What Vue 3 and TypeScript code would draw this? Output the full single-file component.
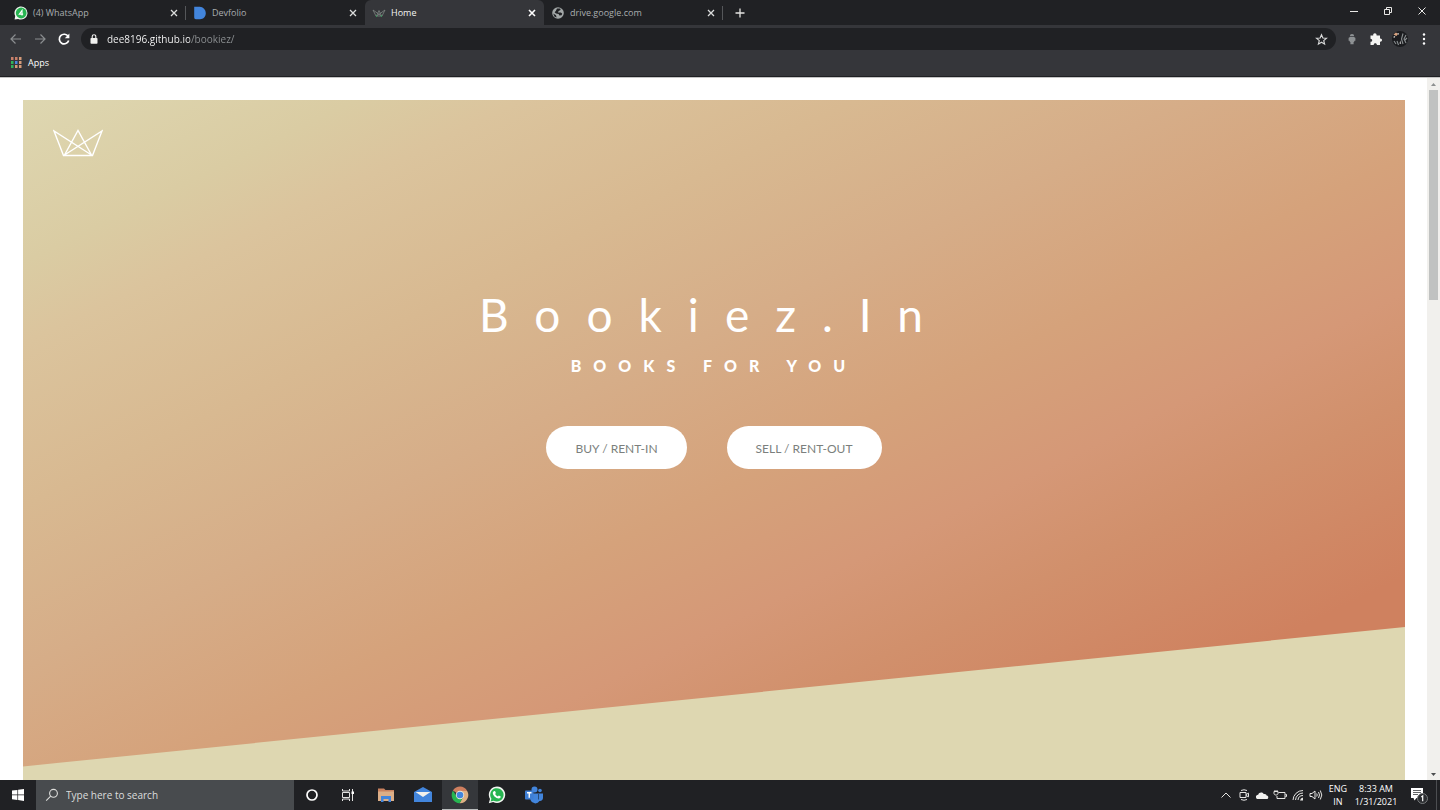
<script setup lang="ts">
interface Tab {
  title: string
  icon: 'whatsapp' | 'devfolio' | 'crown' | 'globe'
  active: boolean
}

const tabs: Tab[] = [
  { title: '(4) WhatsApp', icon: 'whatsapp', active: false },
  { title: 'Devfolio', icon: 'devfolio', active: false },
  { title: 'Home', icon: 'crown', active: true },
  { title: 'drive.google.com', icon: 'globe', active: false },
]

const appDots: { x: number; y: number; c: string }[] = [
  '#c9806a', '#c9806a', '#d59a78',
  '#2fb35a', '#4a86dc', '#d59a78',
  '#2fb35a', '#d59a78', '#d59a78',
].map((c, i) => ({ x: (i % 3) * 4, y: Math.floor(i / 3) * 4, c }))
</script>

<template>
  <div class="desktop">
    <header class="browser">
      <div class="tabstrip">
        <div class="tabs">
          <div v-for="tab in tabs" :key="tab.title" class="tab" :class="{ active: tab.active }">
            <button class="tab-main" type="button">
              <svg v-if="tab.icon === 'whatsapp'" class="fav" viewBox="0 0 14 14" aria-hidden="true">
                <path d="M.6 13.600 1.200 10A6.500 6.500 0 1 1 4.200 12.900Z" fill="#f1f5f1" />
                <circle cx="7.200" cy="7" r="5.400" fill="#27b551" />
                <path d="M8 9.600V4.400L5.300 8.100h3.800" fill="none" stroke="#fff" stroke-width="1.100" />
              </svg>
              <svg v-else-if="tab.icon === 'devfolio'" class="fav" viewBox="0 0 14 14" aria-hidden="true">
                <path d="M1.200 .8h5.600a6.200 6.200 0 0 1 6 6.200c0 3.600-2.300 6.200-5.800 6.200H2.800A1.600 1.600 0 0 1 1.200 11.600Z" fill="#4285dc" />
              </svg>
              <svg v-else-if="tab.icon === 'crown'" class="fav" viewBox="0 0 14 14" aria-hidden="true">
                <path d="M1 4 4 10h6l3-6L4.500 10 7 4.500 9.500 10Z" fill="none" stroke="#7e8583" stroke-width=".8" />
                <circle cx="4.500" cy="10" r=".7" fill="#2fa35a" />
                <circle cx="9.500" cy="10" r=".7" fill="#2fa35a" />
              </svg>
              <svg v-else class="fav" viewBox="0 0 14 14" aria-hidden="true">
                <circle cx="7" cy="7" r="5.800" fill="#a3a8a8" />
                <path d="M6 2.600 9.200 2.400 9.600 4 7.600 5 7 6.400 9.800 6.400 11.200 7.600 10.600 9.200 8.400 9.400 7.600 8 5 7.600 3.600 6.200 4.800 5ZM2.200 7.600 5 9.200 5.600 11.600 3.400 10.400Z" fill="#202124" />
              </svg>
              <span>{{ tab.title }}</span>
            </button>
            <button class="close" type="button" aria-label="Close tab">
              <svg viewBox="0 0 10 10"><path d="M2 2 8 8M8 2 2 8" /></svg>
            </button>
          </div>
          <button class="newtab" type="button" aria-label="New tab">
            <svg viewBox="0 0 12 12"><path d="M6 1.500v9M1.500 6h9" /></svg>
          </button>
        </div>
        <div class="winctl">
          <button type="button" aria-label="Minimize"><svg viewBox="0 0 12 12"><path d="M2 6.500h8" /></svg></button>
          <button type="button" aria-label="Restore"><svg viewBox="0 0 12 12"><path d="M2.500 4.500h5v5h-5ZM4.500 4.500v-2h5v5h-2" /></svg></button>
          <button type="button" aria-label="Close"><svg viewBox="0 0 12 12"><path d="M2.500 2.500l7 7M9.500 2.500l-7 7" /></svg></button>
        </div>
      </div>

      <div class="toolbar">
        <button class="tool dim" type="button" aria-label="Back">
          <svg viewBox="0 0 14 14"><path d="M12 7H2.500M6.500 2.500 2 7l4.500 4.500" /></svg>
        </button>
        <button class="tool dim" type="button" aria-label="Forward">
          <svg viewBox="0 0 14 14"><path d="M2 7h9.500M7.500 2.500 12 7l-4.500 4.500" /></svg>
        </button>
        <button class="tool" type="button" aria-label="Reload">
          <svg viewBox="0 0 14 14"><path d="M11.200 4.500A4.800 4.800 0 1 0 11.700 8.500" stroke-width="1.700" /><path d="M12.400 1.500v4.700H7.800Z" fill="#fff" stroke="none" /></svg>
        </button>
        <div class="omnibox">
          <svg class="lock" viewBox="0 0 10 12" aria-hidden="true">
            <rect x="1.500" y="5" width="7" height="5.800" rx=".8" fill="#f1f1ef" />
            <path d="M3.200 5V3.500a1.800 1.800 0 0 1 3.600 0V5" fill="none" stroke="#f1f1ef" stroke-width="1.100" />
          </svg>
          <input class="url" type="text" aria-label="Address" value="dee8196.github.io/bookiez/" />
          <button class="tool star" type="button" aria-label="Bookmark this page">
            <svg viewBox="0 0 14 14"><path d="m7 1.800 1.500 3.600 3.900.3-3 2.500.95 3.800L7 9.900 3.650 12l.95-3.800-3-2.500 3.900-.3Z" /></svg>
          </button>
        </div>
        <button class="tool" type="button" aria-label="Extension">
          <svg viewBox="0 0 14 14"><g fill="#8d9193" stroke="none"><path d="M4.800 4.200a2.200 2.200 0 0 1 4.400 0Z" /><path d="M4.400 5h5.200v.8h.8v3h-.8L9 10H8.600v2.200H5.400V10H5l-.6-1.200h-.8v-3h.8Z" /></g></svg>
        </button>
        <button class="tool" type="button" aria-label="Extensions">
          <svg viewBox="0 0 14 14"><path d="M1.500 3.500h2.700C3.800.5 7.900.5 7.600 3.500h3.400v3c2.700-.3 2.700 3.500 0 3.200V13H7.900c.1-2.500-3.300-2.500-3.200 0H1.500V9.700c2.300.2 2.300-3 0-3Z" fill="#f5f5f3" stroke="none" /></svg>
        </button>
        <button class="tool avatar" type="button" aria-label="Profile">
          <svg viewBox="0 0 18 18">
            <circle cx="9" cy="9" r="8" fill="#1b1c1f" />
            <path d="M2.500 4.500 5 2.500l2 1.500-1.500 2Z" fill="#d9a27e" />
            <path d="M2 7 4.500 5.500l-1 2.500ZM8.500 13.500l.7-3 1 3.500ZM6 3.500l2-.5-.5 2Z" fill="#c8c8c5" />
            <path d="M12 3.500 10.500 9l1.500 5M15 5l-2 4 2 4M16 8l-2 2M6 11l1.500 4M3 11l2 3" fill="none" stroke="#8a8f91" stroke-width="1.100" />
          </svg>
        </button>
        <button class="tool" type="button" aria-label="Menu">
          <svg viewBox="0 0 14 14"><g fill="#fff" stroke="none"><circle cx="7" cy="2.500" r="1.200" /><circle cx="7" cy="7" r="1.200" /><circle cx="7" cy="11.500" r="1.200" /></g></svg>
        </button>
      </div>

      <nav class="bookmarks">
        <button type="button">
          <svg viewBox="0 0 11 11" aria-hidden="true">
            <rect v-for="(d, i) in appDots" :key="i" :x="d.x" :y="d.y" width="2.500" height="3" :fill="d.c" />
          </svg>
          Apps
        </button>
      </nav>
    </header>

    <div class="viewport">
      <main class="page">
        <section class="hero">
          <div class="slope"></div>
          <a class="brand" href="#home" aria-label="Home">
            <svg viewBox="0 0 50 28"><path d="M1 2 10.500 26.500h29L49 2 11.500 26 25 1.500 38.500 26Z" /></svg>
          </a>
          <div class="intro">
            <h1>Bookiez.In</h1>
            <h2>BOOKS FOR YOU</h2>
            <div class="actions">
              <a class="pill" href="#buy">BUY / RENT-IN</a>
              <a class="pill" href="#sell">SELL / RENT-OUT</a>
            </div>
          </div>
        </section>
      </main>
      <div class="scrollbar" aria-hidden="true">
        <svg viewBox="0 0 13 12"><path d="M4 8h5L6.500 5Z" fill="#8d9090" /></svg>
        <div class="track"><div class="thumb"></div></div>
        <svg viewBox="0 0 13 12"><path d="M4 5h5L6.500 8Z" fill="#4b4d4f" /></svg>
      </div>
    </div>

    <footer class="taskbar">
      <button class="start" type="button" aria-label="Start">
        <svg viewBox="0 0 12 12"><path d="M0 1.600 5.400.9v4.700H0ZM6.100.8 12 0v5.600H6.100ZM0 6.300h5.400V11L0 10.300ZM6.100 6.300H12V12l-5.900-.9Z" fill="#fff" /></svg>
      </button>
      <label class="search">
        <svg viewBox="0 0 14 14" aria-hidden="true"><circle cx="8.500" cy="5.300" r="3.900" /><path d="M5.700 8.100 1.200 12.600" /></svg>
        <input type="text" placeholder="Type here to search" aria-label="Type here to search" />
      </label>
      <div class="apps">
        <button type="button" aria-label="Cortana">
          <svg viewBox="0 0 20 20"><circle cx="10" cy="10" r="5" fill="none" stroke="#fff" stroke-width="1.700" /></svg>
        </button>
        <button type="button" aria-label="Task view">
          <svg viewBox="0 0 20 20"><g fill="none" stroke="#e4e4e2"><path d="M3.500 4v2h7V4M3.500 16v-2h7v2M3.500 7.500h7v5h-7ZM13.500 4v12" /></g><path d="M12.500 6.500h2.500v2.500h-2.500Z" fill="#fff" /></svg>
        </button>
        <button type="button" aria-label="File Explorer">
          <svg viewBox="0 0 20 20"><path d="M2 3.500h6l1.500 1.500H18V16H2Z" fill="#c9825f" /><path d="M2 6.500h16v9.500H2Z" fill="#dcae87" /><path d="M5 11h10v6h-2.500v-3h-5v3H5Z" fill="#4285dc" /></svg>
        </button>
        <button type="button" aria-label="Mail">
          <svg viewBox="0 0 20 20"><path d="M1 7 10 2l9 5v10H1Z" fill="#4285dc" /><path d="M2.500 7h15L10 12Z" fill="#f3f1eb" /></svg>
        </button>
        <button class="running" type="button" aria-label="Chrome">
          <svg viewBox="0 0 20 20"><path d="M10 10 2.900 5.500A8.300 8.300 0 0 1 17.200 5.900H10Z" fill="#cf7f5f" /><path d="M10 10V5.900h7.200A8.300 8.300 0 0 1 9.600 18.300L13 12Z" fill="#ddb083" /><path d="M2.900 5.600A8.300 8.300 0 0 0 9.600 18.300L13 12.500 10 13 7 12Z" fill="#27b551" /><circle cx="10" cy="10" r="4.200" fill="#e9e5dc" /><circle cx="10" cy="10" r="3.300" fill="#4285dc" /></svg>
        </button>
        <button type="button" aria-label="WhatsApp">
          <svg viewBox="0 0 20 20"><path d="M1.800 18.300 3 14A8.200 8.200 0 1 1 6.200 17Z" fill="#f2f5f1" /><path d="M3.600 16.500 4.400 13.700A6.700 6.700 0 1 1 6.600 15.700Z" fill="#27b551" /><path d="M7 6.200c.6-.5 1.100-.3 1.300.2l.6 1.500c-.1.500-.6.700-.8 1.100.6 1.200 1.500 2 2.700 2.500l1-.9c.6.100 1.500.6 1.900.9.100 1.200-.9 2-2 2-3-.2-5.700-2.900-5.900-5.500 0-.7.500-1.400 1.200-1.800Z" fill="#fff" /></svg>
        </button>
        <button type="button" aria-label="Teams">
          <svg viewBox="0 0 20 20"><circle cx="10.500" cy="4.500" r="3" fill="#4285dc" /><circle cx="16" cy="5.500" r="1.800" fill="#4285dc" /><path d="M7 8.500h12V13a3 3 0 0 1-3.500 3A5 5 0 0 1 6.500 15Z" fill="#4285dc" /><path d="M14.500 9v5.500" stroke="#25405f" stroke-width=".8" /><rect x="1" y="5.500" width="8.500" height="9" rx=".8" fill="#3f7fd4" /><path d="M3 7.800h4.500M5.250 7.800v5" stroke="#fff" stroke-width="1.400" /></svg>
        </button>
      </div>
      <div class="tray">
        <button type="button" aria-label="Show hidden icons"><svg viewBox="0 0 14 14"><path d="M2.500 9.500l4.500-4.500 4.500 4.500" /></svg></button>
        <button type="button" aria-label="Meet now"><svg viewBox="0 0 14 14"><path d="M3 4.500h6v5H3ZM9 6.500l2.500-1.300v3.600L9 7.500M4 2.500q3-1.500 6 0M4 11.500q3 1.500 6 0" /></svg></button>
        <button type="button" aria-label="OneDrive"><svg viewBox="0 0 14 14"><path d="M1 9.500C.6 7.500 2 6.600 3.200 6.700 3.800 4.300 7.300 3.600 8.700 6c2-.5 2.900.7 2.900 1.600C13 7.700 13.800 9 13 10.500c-.3.500-1 .6-1.500.6H3C2 11.100 1.200 10.600 1 9.500Z" fill="#f1f1ef" stroke="none" /></svg></button>
        <button type="button" aria-label="Battery"><svg viewBox="0 0 14 14"><path d="M5.500 4.500H12v6H4V8M12.500 6.500h1v2h-1M1 3.500h4v2c0 2-4 2-4 0ZM2 2v1.500M4 2v1.500" /></svg></button>
        <button type="button" aria-label="Network"><svg viewBox="0 0 14 14"><path d="M2 12A10 10 0 0 1 12 2.500M4.500 12A7.500 7.500 0 0 1 12 5M7 12a5 5 0 0 1 5-4.500" /><path d="M9 12.500a3.500 3.500 0 0 1 3-3v3Z" fill="#e6e6e4" stroke="none" /></svg></button>
        <button type="button" aria-label="Volume"><svg viewBox="0 0 14 14"><path d="M1 5.500h2L6 3v8L3 8.500H1ZM7.700 5.500q1 1.500 0 3M9.500 4q2 3 0 6M11.300 2.500q3 4.500 0 9" /></svg></button>
        <button class="lang" type="button">ENG<br />IN</button>
        <button class="clock" type="button">8:33 AM<br />1/31/2021</button>
        <button class="notes" type="button" aria-label="Notifications">
          <svg viewBox="0 0 18 18"><path d="M1 2h12v10H6.500L4.500 14.500 3.500 12H1Z" fill="#fff" /><path d="M3 4.500h8M3 6.500h8M3 8.500h5" stroke="#3b3d40" stroke-width=".8" /><circle cx="12.500" cy="12.500" r="5" fill="#2b2d30" stroke="#777a7c" /><path d="M11.300 11 12.700 9.900v5.300" fill="none" stroke="#fff" stroke-width="1.200" /></svg>
        </button>
        <span class="edge"></span>
      </div>
    </footer>
  </div>
</template>

<style>
html,
body {
  margin: 0;
  background: #fff;
}
</style>

<style scoped>
.desktop {
  display: flex;
  flex-direction: column;
  height: 100vh;
  overflow: hidden;
  font-family: "Open Sans", "Noto Sans", sans-serif;
  color: #fff;
}

* {
  box-sizing: border-box;
}

button,
input {
  margin: 0;
  padding: 0;
  border: 0;
  background: none;
  font: inherit;
  color: inherit;
  outline: none;
}

svg {
  display: block;
  flex: none;
}

.browser {
  flex: none;
  background: #35363a;
  border-bottom: 1px solid #1f2023;
}

.tabstrip {
  display: flex;
  justify-content: space-between;
  height: 25px;
  padding: 0 1px 0 7px;
  background: #202124;
}

.tabs {
  display: flex;
  flex: 0 1 750px;
  min-width: 0;
}

.tab {
  position: relative;
  display: flex;
  align-items: center;
  flex: 0 1 179px;
  min-width: 0;
  padding: 0 7px;
  border-radius: 6px 6px 0 0;
  font-size: 9px;
  color: #a9adaf;
}

.tab.active {
  background: #35363a;
  color: #f4f4f2;
}

.tab:first-child::after,
.tab:nth-child(4)::after {
  content: "";
  position: absolute;
  right: 0;
  top: 6px;
  width: 1px;
  height: 14px;
  background: #55575a;
}

.tab-main {
  display: flex;
  align-items: center;
  gap: 5px;
  flex: 1;
  min-width: 0;
  white-space: nowrap;
}

.fav {
  width: 14px;
  height: 14px;
}

.close svg {
  width: 10px;
  height: 10px;
  fill: none;
  stroke: #dcdddd;
  stroke-width: 1.3;
}

.active .close svg {
  stroke: #fff;
  stroke-width: 1.6;
}

.newtab {
  display: grid;
  place-items: center;
  width: 34px;
}

.newtab svg {
  width: 12px;
  height: 12px;
  fill: none;
  stroke: #e3e3e1;
  stroke-width: 1.3;
}

.winctl {
  display: flex;
}

.winctl button {
  display: grid;
  place-items: center;
  width: 34px;
  height: 22px;
}

.winctl svg {
  width: 12px;
  height: 12px;
  fill: none;
  stroke: #e9e9e7;
}

.toolbar {
  display: flex;
  align-items: center;
  height: 28px;
  padding: 0 4px;
}

.tool {
  display: grid;
  place-items: center;
  flex: none;
  width: 24px;
  height: 22px;
}

.tool svg {
  width: 14px;
  height: 14px;
  fill: none;
  stroke: #fff;
  stroke-width: 1.2;
}

.tool.dim svg {
  stroke: #8b8e90;
}

.tool.avatar svg {
  width: 18px;
  height: 18px;
  stroke: none;
}

.tool.star svg {
  width: 13px;
  height: 13px;
  stroke: #d8d9d9;
}

.omnibox {
  display: flex;
  align-items: center;
  flex: 1;
  min-width: 0;
  height: 22px;
  margin: 0 4px 0 5px;
  padding: 0 3px 0 8px;
  border-radius: 11px;
  background: #202124;
}

.lock {
  width: 10px;
  height: 12px;
}

.url {
  flex: 1;
  min-width: 0;
  margin-left: 8px;
  font-size: 10px;
  background: linear-gradient(90deg, #fff 83px, #8f9395 83px);
  background-clip: text;
  -webkit-background-clip: text;
  -webkit-text-fill-color: transparent;
}

.bookmarks {
  display: flex;
  align-items: center;
  height: 23px;
  padding: 0 11px 4px;
}

.bookmarks button {
  display: flex;
  align-items: center;
  gap: 6px;
  font-size: 9px;
}

.bookmarks svg {
  width: 11px;
  height: 11px;
}

.viewport {
  display: flex;
  flex: 1;
  min-height: 0;
  background: #fff;
  border-top: 1px solid #c4c4c4;
}

.page {
  display: flex;
  flex: 1;
  min-width: 0;
  padding: 22px 22px 0 23px;
}

.hero {
  position: relative;
  flex: 1;
  min-width: 0;
  padding: 29px 30px;
  background: #ded7b1;
}

.slope {
  position: absolute;
  inset: 0;
  background: linear-gradient(154deg, #ded7b1 0%, #dacca3 12%, #dbc49d 18%, #d8b991 30%, #d6ad88 42%, #d5a27b 54%, #d59877 64%, #d1906c 72%, #cf815f 85%);
  clip-path: polygon(0 0, 100% 0, 100% 77.5%, 0 98%);
}

.brand {
  position: relative;
  display: block;
  width: 50px;
}

.brand svg {
  width: 50px;
  height: 28px;
  fill: none;
  stroke: #fff;
  stroke-width: 1.4;
}

.intro {
  position: relative;
  display: flex;
  flex-direction: column;
  align-items: center;
  padding-top: 128px;
  font-family: Lato, sans-serif;
}

h1,
h2 {
  margin: 0;
  white-space: nowrap;
}

h1 {
  font-size: 46px;
  line-height: 60px;
  font-weight: 400;
  letter-spacing: 26px;
}

h2 {
  margin-top: 11px;
  font-size: 16px;
  line-height: 20px;
  font-weight: 900;
  letter-spacing: 12px;
}

.actions {
  display: flex;
  gap: 40px;
  margin-top: 50px;
}

.pill {
  padding: 2px 29px 0;
  border-radius: 22px;
  background: #fff;
  font-size: 12px;
  line-height: 41px;
  color: #7b7f7d;
  text-decoration: none;
  white-space: nowrap;
}

.scrollbar {
  display: flex;
  flex-direction: column;
  flex: none;
  width: 13px;
  background: #f1f0ed;
}

.scrollbar svg {
  width: 13px;
  height: 12px;
}

.track {
  flex: 1;
  padding: 0 2px;
}

.thumb {
  height: 31%;
  background: #c0c2c1;
}

.taskbar {
  display: flex;
  flex: none;
  height: 30px;
  background: #202124;
}

.start {
  display: grid;
  place-items: center;
  width: 36px;
}

.start svg {
  width: 12px;
  height: 12px;
}

.search {
  display: flex;
  align-items: center;
  gap: 7px;
  flex: 0 1 258px;
  padding-left: 9px;
  background: #484b4e;
}

.search svg {
  width: 14px;
  height: 14px;
  fill: none;
  stroke: #dededc;
  stroke-width: 1.1;
}

.search input {
  flex: 1;
  min-width: 0;
  font-size: 10px;
}

.search input::placeholder {
  color: #dcdddd;
  opacity: 1;
}

.apps {
  display: flex;
  gap: 1px;
}

.apps button {
  display: grid;
  place-items: center;
  width: 36px;
}

.apps svg {
  width: 20px;
  height: 20px;
}

.apps .running {
  background: #35373b;
  box-shadow: inset 0 -1px #b9bcbc;
}

.tray {
  display: flex;
  align-items: center;
  margin-left: auto;
  font-size: 9px;
  line-height: 13px;
}

.tray button {
  display: grid;
  place-items: center;
  width: 18px;
}

.tray svg {
  width: 14px;
  height: 14px;
  fill: none;
  stroke: #e6e6e4;
}

.tray .lang {
  display: block;
  width: 26px;
  text-align: center;
}

.tray .clock {
  display: block;
  width: 50px;
  text-align: center;
  white-space: nowrap;
}

.tray .notes {
  width: 35px;
}

.tray .notes svg {
  width: 18px;
  height: 18px;
  stroke: none;
}

.edge {
  align-self: stretch;
  width: 4px;
  border-left: 1px solid #4c4e51;
}
</style>
